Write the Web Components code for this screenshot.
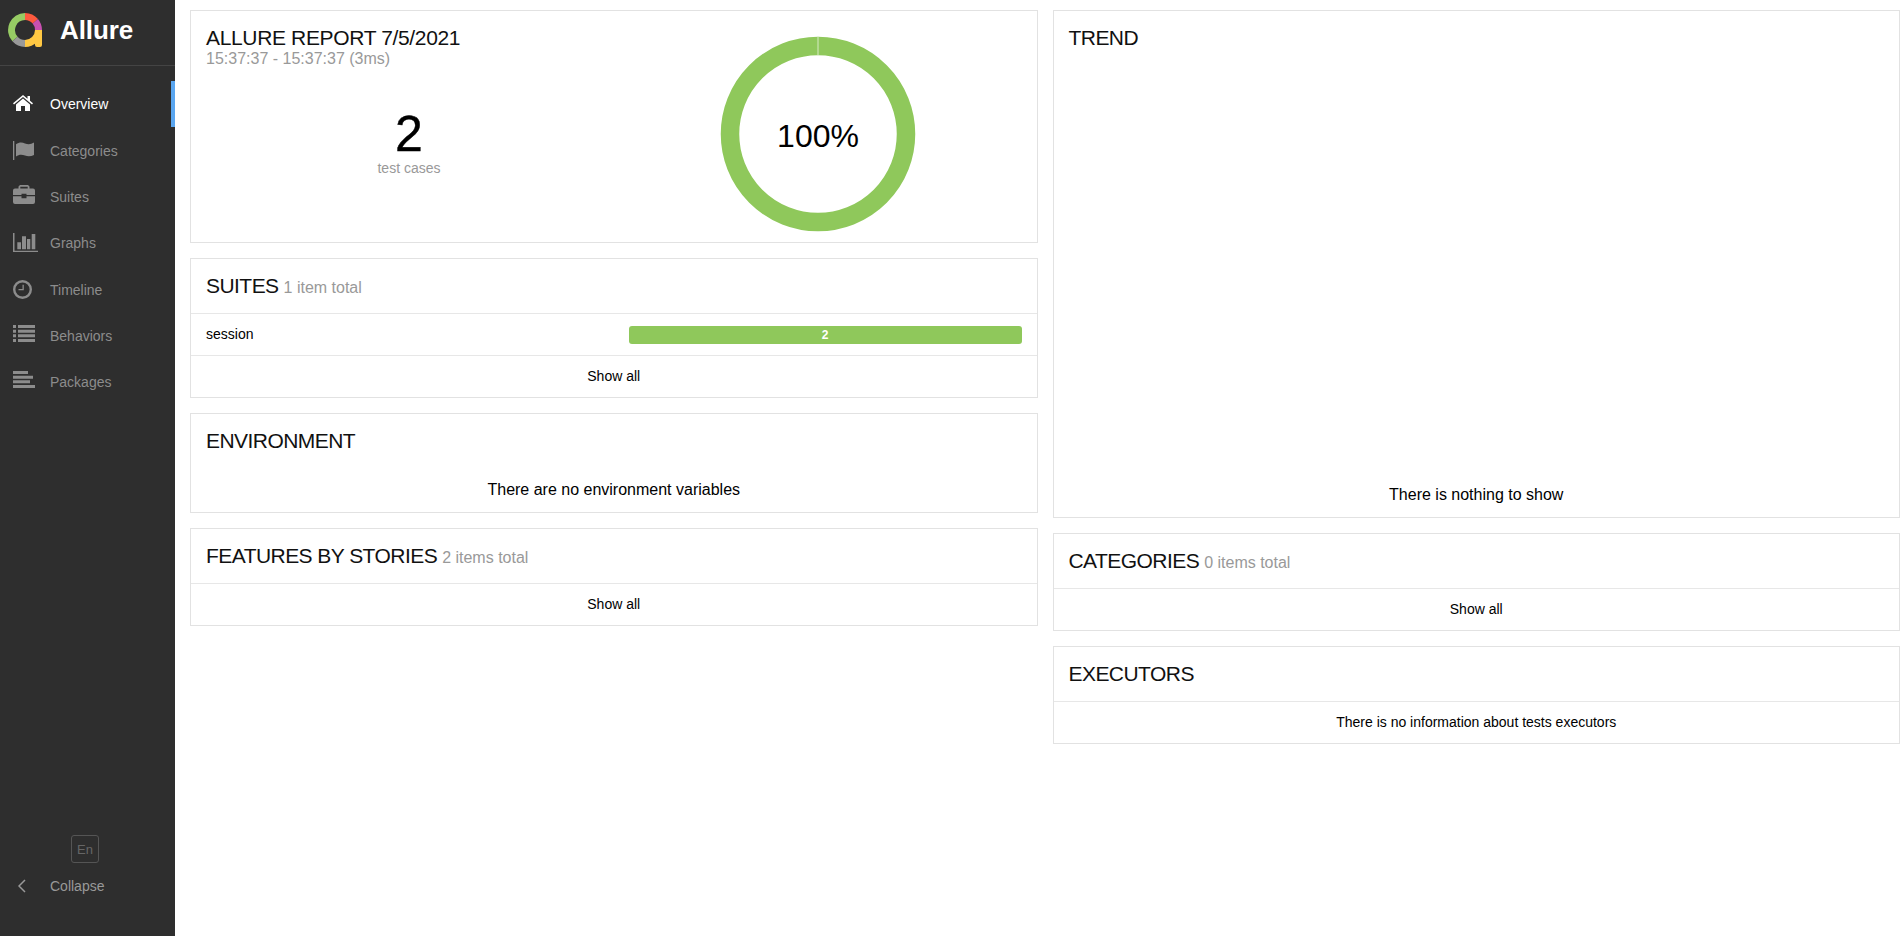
<!DOCTYPE html>
<html lang="en">
<head>
<meta charset="UTF-8">
<title>Allure Report</title>
<style>
  html, body { margin: 0; height: 100%; }
  body { font-family: "Liberation Sans", Arial, sans-serif; color: #000; background: #fff; }
</style>
</head>
<body>
<allure-app>
  <side-nav slot="side">
    <nav-item active label="Overview"><svg width="20" height="16" viewBox="0 0 20 16" style="margin-bottom:2px"><path d="M10 0 L14.500 3.700 V1 h2.500 v4.700 L20 8.300 l-1 1.200 L10 2 1 9.500 0 8.300Z M3 9.500 L10 3.600 17 9.500 V16 H12 V11 H8 V16 H3Z"/></svg></nav-item>
    <nav-item label="Categories"><svg width="21" height="19" viewBox="0 0 21 19" style="margin-bottom:1px"><path d="M0 0 h1.300 v19 H0Z M3 3.200 c3-2 6-2 9-.8 3 1.200 6 1 9-.8 V14 c-3 1.600-6 1.800-9 .6 -3-1.200-6-1.200-9 .8Z"/></svg></nav-item>
    <nav-item label="Suites"><svg width="22" height="19" viewBox="0 0 22 19" style="margin-bottom:5px"><path d="M7 0 h8 l1.500 1.500 V3.500 H20 a2 2 0 0 1 2 2 V10 H13.500 V8.700 h-5 V10 H0 V5.500 a2 2 0 0 1 2-2 h3.500 V1.500Z M7.300 1.700 V3.500 h7.400 V1.700Z M0 11.300 h8.500 v2 h5 v-2 H22 V17 a2 2 0 0 1-2 2 H2 a2 2 0 0 1-2-2Z"/></svg></nav-item>
    <nav-item label="Graphs"><svg width="25" height="19" viewBox="0 0 25 19" style="margin-bottom:2px"><path d="M0 0 h1.500 v17.700 H25 V19 H0Z M4.300 9.300 h3.700 v7 H4.300Z M9 3.300 h4 v13 H9Z M14 6 h3.300 v10.300 H14Z M18.700 1 h3.600 v15.300 h-3.600Z"/></svg></nav-item>
    <nav-item label="Timeline"><svg width="19" height="19" viewBox="0 0 19 19" style="margin-bottom:1px"><path fill-rule="evenodd" d="M9.500 0 a9.500 9.500 0 1 0 0 19 a9.500 9.500 0 1 0 0-19Z M9.500 2.400 a7.100 7.100 0 1 1 0 14.200 a7.100 7.100 0 1 1 0-14.200Z M9.500 4.800 h1.300 v5.500 H5.500 V9 h4Z"/></svg></nav-item>
    <nav-item label="Behaviors"><svg width="22" height="17" viewBox="0 0 22 17" style="margin-bottom:4px"><path d="M0 0 h3 v3 H0Z M5 0 h17 v3 H5Z M0 4.700 h3 v3 H0Z M5 4.700 h17 v3 H5Z M0 9.300 h3 v3 H0Z M5 9.300 h17 v3 H5Z M0 14 h3 v3 H0Z M5 14 h17 v3 H5Z"/></svg></nav-item>
    <nav-item label="Packages"><svg width="22" height="17" viewBox="0 0 22 17" style="margin-bottom:5px"><path d="M0 0 h15 v3 H0Z M0 4.700 h20 v3 H0Z M0 9.300 h17 v3 H0Z M0 14 h22 v3 H0Z"/></svg></nav-item>
  </side-nav>

  <report-column slot="left">
    <report-card>
      <summary-widget></summary-widget>
    </report-card>
    <report-card heading="SUITES" note="1 item total" ruled>
      <bar-row label="session" value="2"></bar-row>
      <card-row>Show all</card-row>
    </report-card>
    <report-card heading="ENVIRONMENT">
      <card-row big>There are no environment variables</card-row>
    </report-card>
    <report-card heading="FEATURES BY STORIES" note="2 items total" ruled>
      <card-row>Show all</card-row>
    </report-card>
  </report-column>

  <report-column slot="right">
    <report-card heading="TREND">
      <card-row big tall>There is nothing to show</card-row>
    </report-card>
    <report-card heading="CATEGORIES" note="0 items total" ruled>
      <card-row>Show all</card-row>
    </report-card>
    <report-card heading="EXECUTORS" ruled>
      <card-row>There is no information about tests executors</card-row>
    </report-card>
  </report-column>
</allure-app>

<script>
  // Small helper so each class only has to say what goes in its shadow root
  class ShadowElement extends HTMLElement {
    constructor() {
      super();
      this.attachShadow({ mode: 'open' });
    }
    connectedCallback() {
      this.shadowRoot.innerHTML = this.render();
    }
  }

  customElements.define('allure-app', class extends ShadowElement {
    render() {
      return `
        <style>
          :host { display: flex; min-height: 936px; height: 936px; overflow: hidden; }
          .main { flex: 1; min-width: 0; display: flex; gap: 15px; padding: 10px 4px 0 15px; align-items: flex-start; }
          ::slotted([slot="left"]), ::slotted([slot="right"]) { flex: 1 1 0; min-width: 0; }
        </style>
        <slot name="side"></slot>
        <div class="main">
          <slot name="left"></slot>
          <slot name="right"></slot>
        </div>`;
    }
  });

  customElements.define('side-nav', class extends ShadowElement {
    render() {
      return `
        <style>
          :host { display: flex; flex-direction: column; flex: 0 0 175px; width: 175px; background: #2e2e2e; }
          .brand { display: flex; align-items: center; gap: 18px; height: 60px; padding: 0 0 5px 8px; border-bottom: 1px solid #444; }
          .brand svg { width: 34px; height: 34px; flex: none; }
          .brand span { color: #fff; font-size: 26px; font-weight: 700; letter-spacing: -0.1px; }
          nav { padding-top: 15px; flex: 1; }
          .foot { display: flex; flex-direction: column; padding-bottom: 27px; }
          .lang { align-self: center; box-sizing: border-box; width: 28px; height: 28px; margin-left: -5px; border: 1px solid #555; border-radius: 3px; color: #666; font-size: 13px; display: flex; align-items: center; justify-content: center; }
          .collapse { display: flex; align-items: center; height: 46px; color: #999; font-size: 14px; }
          .collapse svg { width: 8px; height: 14px; margin: 0 24px 0 18px; fill: none; stroke: #999; stroke-width: 1.500; }
        </style>
        <div class="brand">
          <svg viewBox="0 0 34 34">
            <g fill="none" stroke-width="7">
              <path stroke="#97cc64" d="M7 26 A13.500 13.500 0 0 1 17 3.500"/>
              <path stroke="#fd5a3e" d="M17 3.500 A13.500 13.500 0 0 1 27.300 8.300"/>
              <path stroke="#c850b0" d="M27.300 8.300 A13.500 13.500 0 0 1 30.500 17"/>
              <path stroke="#999" d="M7 26 A13.500 13.500 0 0 0 17 30.500"/>
              <path stroke="#ffc843" d="M17 30.500 A13.500 13.500 0 0 0 30.500 17"/>
            </g>
            <path fill="#ffc843" d="M27 17 h7 v15 a2 2 0 0 1-2 2 h-3 a2 2 0 0 1-2-2Z"/>
          </svg>
          <span>Allure</span>
        </div>
        <nav><slot></slot></nav>
        <div class="foot">
          <div class="lang">En</div>
          <div class="collapse"><svg viewBox="0 0 8 14"><path d="M7 1 L1 7 L7 13"/></svg>Collapse</div>
        </div>`;
    }
  });

  customElements.define('nav-item', class extends ShadowElement {
    render() {
      return `
        <style>
          :host { display: flex; align-items: center; height: 46.350px; color: #8c8c8c; fill: #8c8c8c; font-size: 14px; }
          :host([active]) { color: #fff; fill: #fff; box-shadow: inset -4px 0 0 #5aa6f0; }
          .icon { flex: none; width: 25px; margin: 0 12px 0 13px; display: flex; align-items: center; }
        </style>
        <span class="icon"><slot></slot></span>
        <span>${this.getAttribute('label')}</span>`;
    }
  });

  customElements.define('report-column', class extends ShadowElement {
    render() {
      return `
        <style>:host { display: flex; flex-direction: column; gap: 15px; }</style>
        <slot></slot>`;
    }
  });

  customElements.define('report-card', class extends ShadowElement {
    render() {
      const heading = this.getAttribute('heading');
      const note = this.getAttribute('note');
      const ruled = this.hasAttribute('ruled');
      const head = heading ? `
        <div class="head ${ruled ? 'ruled' : ''}">
          <span class="title">${heading}</span>${note ? `<span class="note">${note}</span>` : ''}
        </div>` : '';
      return `
        <style>
          :host { display: block; border: 1px solid #e2e2e2; background: #fff; }
          .head { height: 54px; padding: 0 15px; display: flex; align-items: center; gap: 5px; box-sizing: border-box; }
          .head.ruled { height: 55px; border-bottom: 1px solid #e7e7e7; }
          .head.ruled .title { margin-bottom: 1px; }
          .title { font-size: 21px; letter-spacing: -0.55px; color: #111; }
          .note { font-size: 16px; color: #999; padding-top: 3px; }
        </style>
        ${head}
        <slot></slot>`;
    }
  });

  customElements.define('card-row', class extends ShadowElement {
    render() {
      return `
        <style>
          :host { display: flex; align-items: center; justify-content: center; height: 41px; padding-bottom: 2px; box-sizing: border-box; font-size: 14px; }
          :host([big]) { font-size: 16px; height: 44px; padding-bottom: 0; }
          :host([tall]) { height: 452px; align-items: flex-end; padding-bottom: 13px; }
        </style>
        <slot></slot>`;
    }
  });

  customElements.define('bar-row', class extends ShadowElement {
    render() {
      return `
        <style>
          :host { display: flex; align-items: center; justify-content: space-between; height: 41px; padding: 0 15px; border-bottom: 1px solid #e7e7e7; font-size: 14px; }
          .bar { width: 393px; height: 18px; border-radius: 3px; background: #8fc85b; color: #fff; font-size: 12px; font-weight: 700; display: flex; align-items: center; justify-content: center; }
          .label { margin-bottom: 1px; }
        </style>
        <span class="label">${this.getAttribute('label')}</span>
        <div class="bar">${this.getAttribute('value')}</div>`;
    }
  });

  customElements.define('summary-widget', class extends ShadowElement {
    render() {
      return `
        <style>
          :host { display: block; height: 231px; padding: 15px 15px 0; box-sizing: border-box; position: relative; }
          h2 { margin: 0; font-size: 21px; letter-spacing: -0.35px; font-weight: 400; line-height: 24px; color: #111; }
          .range { font-size: 16px; line-height: 18px; color: #999; }
          .count { position: absolute; left: 15px; width: 406px; top: 98px; text-align: center; }
          .count b { display: block; font-size: 50px; font-weight: 400; line-height: 50px; -webkit-text-stroke: 0.4px #000; }
          .count span { font-size: 14px; color: #999; position: relative; }
          .donut { position: absolute; left: 529px; top: 25px; width: 196px; height: 196px; }
          .pct { position: absolute; left: 529px; top: 25px; width: 196px; height: 196px; display: flex; align-items: center; justify-content: center; font-size: 32px; padding-top: 4px; box-sizing: border-box; }
        </style>
        <h2>ALLURE REPORT 7/5/2021</h2>
        <div class="range">15:37:37 - 15:37:37 (3ms)</div>
        <div class="count"><b>2</b><span>test cases</span></div>
        <svg class="donut" viewBox="0 0 196 196">
          <circle cx="98" cy="98" r="88" fill="none" stroke="#8fc85b" stroke-width="18.500"/>
          <path d="M98 .75 V19.250" stroke="#d6ebc4" stroke-width="1"/>
        </svg>
        <div class="pct">100%</div>`;
    }
  });
</script>
</body>
</html>
